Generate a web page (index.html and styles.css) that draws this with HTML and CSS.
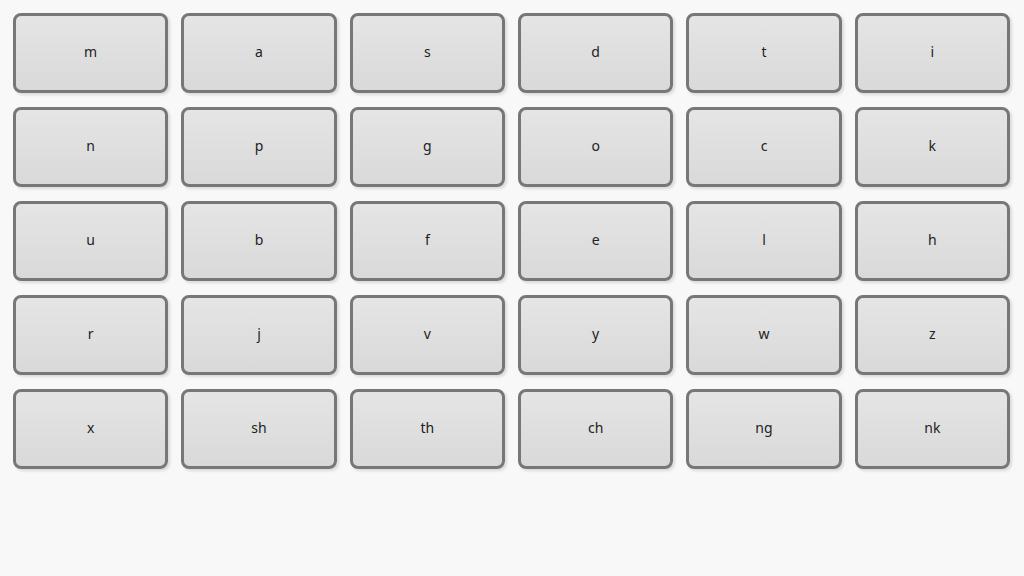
FILE: index.html
```html
<!DOCTYPE html>
<html lang="en">

<head>
    <meta charset="UTF-8">
    <title>Sounds</title>
    <meta name="viewport" content="width=device-width, initial-scale=1.0">
    <link rel="stylesheet" href="styles.css">
</head>

<body>
    <!-- 字母按鈕 -->
    <div class="board">
        <button class="key">m</button>
        <button class="key">a</button>
        <button class="key">s</button>
        <button class="key">d</button>
        <button class="key">t</button>
        <button class="key">i</button>
        <button class="key">n</button>
        <button class="key">p</button>
        <button class="key">g</button>
        <button class="key">o</button>
        <button class="key">c</button>
        <button class="key">k</button>
        <button class="key">u</button>
        <button class="key">b</button>
        <button class="key">f</button>
        <button class="key">e</button>
        <button class="key">l</button>
        <button class="key">h</button>
        <button class="key">r</button>
        <button class="key">j</button>
        <button class="key">v</button>
        <button class="key">y</button>
        <button class="key">w</button>
        <button class="key">z</button>
        <button class="key">x</button>
        <button class="key">sh</button>
        <button class="key">th</button>
        <button class="key">ch</button>
        <button class="key">ng</button>
        <button class="key">nk</button>
    </div>
</body>

</html>
```

FILE: styles.css
```css
html,
body {
    margin: 0;
    height: 100%;
}

body {
    background-color: #f8f8f8;
    font-family: "Noto Sans", "Liberation Sans", sans-serif;
}

.board {
    display: grid;
    grid-template-columns: repeat(6, 1fr);
    grid-auto-rows: 80px;
    gap: 14px 13px;
    padding: 13px 14px 0 13px;
}

.key {
    border: 3px solid #777;
    border-radius: 8px;
    background: linear-gradient(#e5e5e5, #d9d9d9);
    box-shadow: 2px 2px 3px rgba(0, 0, 0, 0.12);
    font-family: inherit;
    font-size: 14px;
    color: #222;
    cursor: pointer;
    padding: 0 0 3px 0;
}
```
